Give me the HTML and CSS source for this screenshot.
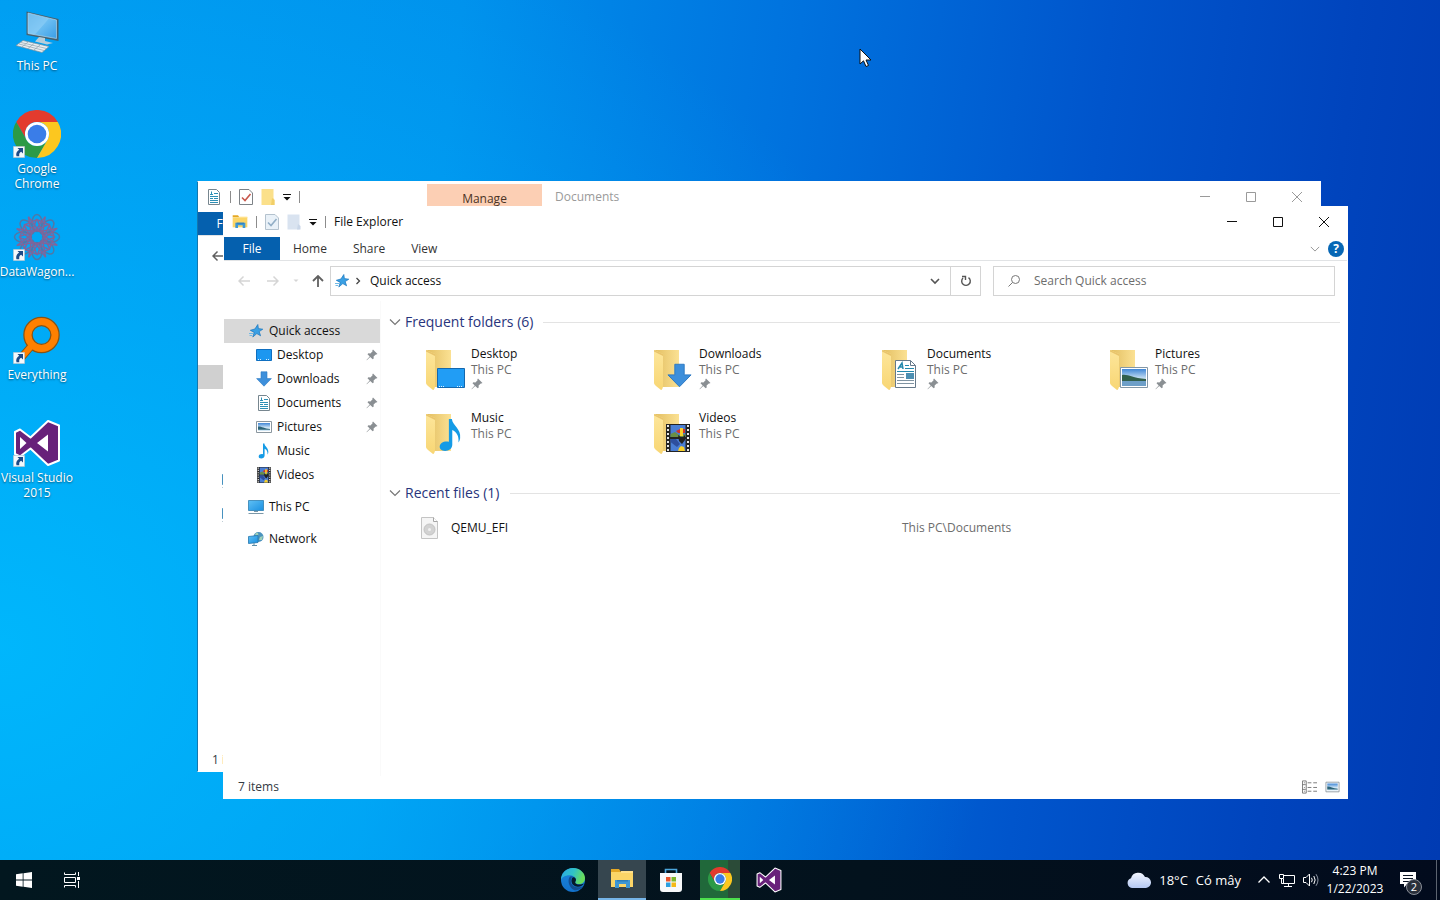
FILE: index.html
```html
<!DOCTYPE html>
<html lang="en">
<head>
    <meta charset="UTF-8">
    <meta name="viewport" content="width=device-width, initial-scale=1.0">
    <title>File Explorer</title>
    <link rel="stylesheet" href="styles.css">
</head>
<body>

    <!-- Shared icons -->
    <svg class="sprite" aria-hidden="true">
        <defs>
            <linearGradient id="gScreen" x1="0" y1="0" x2="1" y2="1">
                <stop offset="0" stop-color="#5fc0f5"/><stop offset="1" stop-color="#1a8fe0"/>
            </linearGradient>
            <linearGradient id="gPc" x1="0" y1="0" x2="1" y2="1">
                <stop offset="0" stop-color="#4fa9e6"/><stop offset="0.5" stop-color="#6cbef2"/><stop offset="1" stop-color="#3a9ee6"/>
            </linearGradient>
            <linearGradient id="gFolder" x1="0" y1="0" x2="1" y2="0">
                <stop offset="0" stop-color="#e3bf62"/><stop offset="1" stop-color="#fbe193"/>
            </linearGradient>
            <linearGradient id="gFlap" x1="0" y1="0" x2="0" y2="1">
                <stop offset="0" stop-color="#fde69b"/><stop offset="1" stop-color="#f8d674"/>
            </linearGradient>
            <linearGradient id="gEdge" x1="0" y1="0" x2="1" y2="0.3">
                <stop offset="0" stop-color="#2aa7e8"/><stop offset="0.55" stop-color="#30c3c6"/><stop offset="1" stop-color="#69dd5c"/>
            </linearGradient>
            <linearGradient id="gEdgeBody" x1="0" y1="0" x2="0" y2="1">
                <stop offset="0" stop-color="#1b86dc"/><stop offset="1" stop-color="#1271cc"/>
            </linearGradient>
            <linearGradient id="gCloud" x1="0" y1="0" x2="0" y2="1">
                <stop offset="0" stop-color="#f3f6ff"/><stop offset="1" stop-color="#b4c8f2"/>
            </linearGradient>
            <linearGradient id="gSky" x1="0" y1="0" x2="0" y2="1">
                <stop offset="0" stop-color="#3f86d6"/><stop offset="0.6" stop-color="#d3e8f6"/>
            </linearGradient>
        </defs>

        <symbol id="chrome" viewBox="0 0 48 48">
            <path fill="#e33b2e" d="M3.2 12A24 24 0 0 1 44.8 12H24A12 12 0 0 0 13.6 30Z"/>
            <path fill="#2c9a46" d="M3.2 12L13.6 30A12 12 0 0 0 34.4 30L24 48A24 24 0 0 1 3.2 12Z"/>
            <path fill="#fcc71f" d="M44.8 12A24 24 0 0 1 24 48L34.4 30A12 12 0 0 0 24 12Z"/>
            <circle cx="24" cy="24" r="12" fill="#fff"/>
            <circle cx="24" cy="24" r="9.3" fill="#3a7de8"/>
        </symbol>

        <symbol id="vs" viewBox="0 0 48 48">
            <path fill="#68217a" stroke="#fff" stroke-width="2" stroke-linejoin="round" d="M35 2L46 6.5V41.5L35 46L17.5 29.5L7 37.5L2 35V13L7 10.5L17.5 18.5Z"/>
            <path fill="#fff" d="M35 15.5V32.5L24 24ZM7 18V30L13.5 24Z"/>
        </symbol>

        <symbol id="shortcut" viewBox="0 0 12 12">
            <path fill="#f4f8fb" stroke="#9aa9b4" stroke-width="0.5" d="M0.3 0.3H11.7V11.7H0.3Z"/>
            <path fill="#1d4a86" d="M4.5 2H10V7.5L8.2 5.8C6.2 6.8 6 8.2 6.3 10.2H3.5C2.6 7.5 3.8 5 6.2 3.8Z"/>
        </symbol>

        <symbol id="star" viewBox="0 0 16 16">
            <path fill="#3aa0e4" stroke="#1a76bd" stroke-width="0.7" d="M9.8 1.5L10.4 5.6L14.8 6.2L11.2 8.6L12.6 12.8L8.8 10.6L4.8 14L6.2 9.4L2.3 7.3L6.9 6Z"/>
            <path stroke="#6fb9e6" stroke-width="1" d="M1 10.5H5M1.5 12.5H4"/>
        </symbol>

        <symbol id="pin" viewBox="0 0 12 12">
            <path fill="#8a8f93" d="M7 0.5L11.5 5L10.3 5.6L9.8 5.4L7.6 7.6L7.7 9.5L6.7 10.3L4.2 7.9L0.8 11.3L0.5 11L3.7 7.4L1.5 5.2L2.4 4.2L4.4 4.4L6.6 2.2L6.3 1.5Z"/>
        </symbol>

        <symbol id="desktopSmall" viewBox="0 0 16 16">
            <path fill="#1c97f0" stroke="#0f6fc0" d="M0.5 2.5H15.5V13.5H0.5Z"/>
            <path stroke="#d8efff" stroke-dasharray="1 1" d="M2 12.5H5M10 12.5H14"/>
        </symbol>

        <symbol id="arrowDown" viewBox="0 0 16 16">
            <path fill="#3d8fdb" stroke="#2b78c2" stroke-width="0.6" d="M5 0.8H11V7.6H15.4L8 15.2L0.6 7.6H5Z"/>
        </symbol>

        <symbol id="docSmall" viewBox="0 0 16 16">
            <path fill="#fff" stroke="#77868f" d="M2.5 0.5H10.5L13.5 3.5V15.5H2.5Z"/>
            <path stroke="#2e8fb5" d="M4 5.5H7M8 4.5H12M4 7.5H12M4 9.5H7M8 9.5H12M4 11.5H12M4 13.5H12M5.5 2.5V5"/>
        </symbol>

        <symbol id="picSmall" viewBox="0 0 16 16">
            <path fill="#fff" stroke="#8b979f" d="M0.5 2.5H15.5V13.5H0.5Z"/>
            <path fill="url(#gSky)" d="M2 4H14V12H2Z"/>
            <path fill="#2c6478" d="M2 7.5C5 7 8 9.5 14 10V10.8H2Z"/>
        </symbol>

        <symbol id="note" viewBox="0 0 16 16">
            <path fill="#159be6" d="M7 0.5H8.4C8.8 3.8 12.8 5 12.3 9.5C12.1 10.6 11.8 11.1 11.5 11.5C11.9 8.5 10.5 6.5 8.6 5.7V12.6C8.6 14.4 7 15.5 5.2 15.5C3.5 15.5 2.5 14.5 2.7 13.2C2.9 11.6 5 10.6 7 11.2Z"/>
        </symbol>

        <symbol id="film" viewBox="0 0 24 28">
            <path fill="#232323" d="M0 0H24V28H0Z"/>
            <path stroke="#e8e8e8" stroke-width="2" stroke-dasharray="2 2" d="M2 1V28M22 1V28"/>
            <path fill="#4a7ed4" d="M4.5 1H19.5V13H4.5ZM4.5 15H19.5V27H4.5Z"/>
            <path fill="#6a8f45" d="M4.5 10L9 8L13 11L19.5 10V13H4.5Z"/>
            <path fill="#2e4f9e" d="M4.5 15H10L14 20L11 23L4.5 18Z"/>
            <path fill="#d23428" d="M10 7L14 5H19V9H12Z"/>
            <path fill="#f7cf2a" d="M14 4H17V12H14ZM13 24L15 22L18 23L19 27H12Z"/>
            <path fill="#222" d="M12 11L16 14L19 11V16L16 20L13 17Z"/>
        </symbol>

        <symbol id="pcSmall" viewBox="0 0 16 16">
            <path fill="url(#gScreen)" stroke="#2f7fb0" stroke-width="0.8" d="M0.5 1.5H15.5V11.5H0.5Z"/>
            <path stroke="#7c98a8" d="M0.5 14.5H15.5M6 12.5H10"/>
        </symbol>

        <symbol id="network" viewBox="0 0 16 16">
            <circle cx="10.5" cy="6" r="5" fill="#4b93bd"/>
            <path fill="#9fd0b8" d="M8 2C10 1 11 3 10 5L7 4ZM12 6L15 5L14 9L11 9Z"/>
            <path fill="url(#gScreen)" stroke="#2476ad" stroke-width="0.8" d="M0.5 5.5L10 4.5V11.5L0.5 12.5Z"/>
            <path stroke="#5d8ea8" d="M4 14.5H9M6 12V14"/>
        </symbol>

        <symbol id="folderBig" viewBox="0 0 28 44">
            <path fill="url(#gFolder)" d="M1 1H25V38H8Z"/>
            <path fill="url(#gFlap)" d="M0 1L9 5V37C9 39 8 41 7 41L2 37C1 36 0 35 0 34Z"/>
            <path fill="#e9c46c" d="M0 1L9 5V7L0 2.5Z"/>
        </symbol>

        <symbol id="explorer" viewBox="0 0 24 22">
            <path fill="#e5a825" d="M1 1H9L11 4H1Z"/>
            <path fill="#fbd567" d="M1 4H23V19H1Z"/>
            <path fill="#ffe08a" d="M11 3H23V5H11Z"/>
            <path fill="#3f97d3" d="M5 12H20V20H16V16H9V20H5Z"/>
            <path fill="#2b7dbb" d="M7 12H18V13.5H7Z"/>
        </symbol>

        <symbol id="check" viewBox="0 0 14 16">
            <path fill="#fff" stroke="#7d8287" d="M0.5 0.5H10L13.5 4V15.5H0.5Z"/>
            <path fill="none" stroke="#c8574c" stroke-width="1.6" d="M3 8.5L6 11.5L11.5 5"/>
        </symbol>

        <symbol id="checkOff" viewBox="0 0 14 16">
            <path fill="#e9f1f8" stroke="#b4c2ce" d="M0.5 0.5H10L13.5 4V15.5H0.5Z"/>
            <path fill="none" stroke="#92aec6" stroke-width="1.6" d="M3 8.5L6 11.5L11.5 5"/>
        </symbol>

        <symbol id="folderTiny" viewBox="0 0 14 16">
            <path fill="#fbe08a" d="M0.5 0H12.5V9L13.5 11V16H0.5Z"/>
            <path fill="#f2cf68" d="M11 9L13.5 11V16H10Z"/>
        </symbol>

        <symbol id="folderTinyOff" viewBox="0 0 14 16">
            <path fill="#d9e3f0" d="M0.5 0.5H12.5V15.5H0.5Z"/>
            <path fill="#c9d6e8" d="M11 10L13.5 12V15.5H10Z"/>
        </symbol>

        <symbol id="more" viewBox="0 0 8 8">
            <path fill="currentColor" d="M0 1H8V2H0ZM0.5 4H7.5L4 7.5Z"/>
        </symbol>

        <symbol id="left" viewBox="0 0 12 12">
            <path fill="none" stroke="currentColor" stroke-width="1.5" d="M12 6H1M5.5 1.5L1 6L5.5 10.5"/>
        </symbol>

        <symbol id="chevron" viewBox="0 0 12 12">
            <path fill="none" stroke="currentColor" stroke-width="1.2" d="M1 3.5L6 8.5L11 3.5"/>
        </symbol>

        <symbol id="min" viewBox="0 0 10 10"><path stroke="currentColor" d="M0 4.5H10"/></symbol>
        <symbol id="max" viewBox="0 0 10 10"><path fill="none" stroke="currentColor" d="M0.5 0.5H9.5V9.5H0.5Z"/></symbol>
        <symbol id="close" viewBox="0 0 10 10"><path stroke="currentColor" d="M0 0L10 10M10 0L0 10"/></symbol>
    </svg>

    <main class="desktop">
        <div class="shortcuts">
            <a class="shortcut" href="#">
                <span class="shortcutIcon">
                    <svg viewBox="0 0 48 48">
                        <path fill="#46606f" d="M13.5 4.5L45.5 12V34L13.5 28Z"/>
                        <path fill="url(#gPc)" stroke="#a9d6f0" stroke-width="0.7" d="M15 6L43.5 13V31.5L15 26.5Z"/>
                        <path fill="#a5dafa" opacity="0.4" d="M15 6L36 11.5L22 27.5L15 26.5Z"/>
                        <path fill="#b8cdd9" d="M26 30L32 31V34L40 36L34 37.5L22 34.5Z"/>
                        <path fill="#e9eff3" stroke="#7c8f9b" stroke-width="0.7" d="M10 33.5L36 39.5L29 45.5L3 38.5Z"/>
                        <path stroke="#8fa0ab" stroke-width="0.7" d="M8 35.5L33.5 41.5M6 37L31 43.5M15 35L9 40M21 36.5L15 41.5M27 38L21 43"/>
                    </svg>
                </span>
                <span>This PC</span>
            </a>
            <a class="shortcut" href="#">
                <span class="shortcutIcon"><svg><use href="#chrome"/></svg><svg class="badge"><use href="#shortcut"/></svg></span>
                <span>Google Chrome</span>
            </a>
            <a class="shortcut" href="#">
                <span class="shortcutIcon">
                    <svg viewBox="-24 -24 48 48">
                        <g fill="none" stroke="#4f78a8" stroke-width="1.5">
                            <ellipse id="petal" cx="0" cy="-14" rx="5" ry="8.5"/>
                            <use href="#petal" transform="rotate(45)"/>
                            <use href="#petal" transform="rotate(90)"/>
                            <use href="#petal" transform="rotate(135)"/>
                            <use href="#petal" transform="rotate(180)"/>
                            <use href="#petal" transform="rotate(225)"/>
                            <use href="#petal" transform="rotate(270)"/>
                            <use href="#petal" transform="rotate(315)"/>
                        </g>
                        <g fill="none" stroke="#80659a" stroke-width="1.5">
                            <path id="spike" d="M-4 -5L0 -22L4 -5L-6 -16L6 -16Z" transform="rotate(22)"/>
                            <use href="#spike" transform="rotate(45)"/>
                            <use href="#spike" transform="rotate(90)"/>
                            <use href="#spike" transform="rotate(135)"/>
                            <use href="#spike" transform="rotate(180)"/>
                            <use href="#spike" transform="rotate(225)"/>
                            <use href="#spike" transform="rotate(270)"/>
                            <use href="#spike" transform="rotate(315)"/>
                        </g>
                    </svg>
                    <svg class="badge"><use href="#shortcut"/></svg>
                </span>
                <span>DataWagon...</span>
            </a>
            <a class="shortcut" href="#">
                <span class="shortcutIcon">
                    <svg viewBox="0 0 48 48">
                        <path stroke="#8a5312" stroke-width="8" d="M20 28L8 42"/>
                        <circle cx="28.5" cy="19" r="13.5" fill="none" stroke="#8a5312" stroke-width="9.5"/>
                        <path stroke="#ff8000" stroke-width="6" d="M21 27L8 42"/>
                        <circle cx="28.5" cy="19" r="13.5" fill="none" stroke="#ff8000" stroke-width="7"/>
                    </svg>
                    <svg class="badge"><use href="#shortcut"/></svg>
                </span>
                <span>Everything</span>
            </a>
            <a class="shortcut" href="#">
                <span class="shortcutIcon"><svg><use href="#vs"/></svg><svg class="badge"><use href="#shortcut"/></svg></span>
                <span>Visual Studio 2015</span>
            </a>
        </div>

        <!-- Background window -->
        <section class="window windowBack">
            <header class="titleBar">
                <svg class="icon16"><use href="#docSmall"/></svg>
                <span class="divider"></span>
                <svg class="iconQuick"><use href="#check"/></svg>
                <svg class="iconQuick"><use href="#folderTiny"/></svg>
                <svg class="iconMore"><use href="#more"/></svg>
                <span class="divider"></span>
                <span class="manageTab">Manage</span>
                <span class="title">Documents</span>
                <div class="caption">
                    <button aria-label="Minimize"><svg><use href="#min"/></svg></button>
                    <button aria-label="Maximize"><svg><use href="#max"/></svg></button>
                    <button aria-label="Close"><svg><use href="#close"/></svg></button>
                </div>
            </header>
            <nav class="tabs"><button class="tab active">File</button></nav>
            <div class="navRow"><button class="navButton" aria-label="Back"><svg><use href="#left"/></svg></button></div>
            <div class="backPane">
                <span class="backSelected"></span>
                <svg class="icon16"><use href="#pcSmall"/></svg>
                <svg class="icon16"><use href="#pcSmall"/></svg>
            </div>
            <footer class="statusBar">1 item</footer>
        </section>

        <!-- Active window -->
        <section class="window windowFront">
            <header class="titleBar">
                <svg class="icon16"><use href="#explorer"/></svg>
                <span class="divider"></span>
                <svg class="iconQuick"><use href="#checkOff"/></svg>
                <svg class="iconQuick"><use href="#folderTinyOff"/></svg>
                <svg class="iconMore"><use href="#more"/></svg>
                <span class="divider"></span>
                <span class="title">File Explorer</span>
                <div class="caption">
                    <button aria-label="Minimize"><svg><use href="#min"/></svg></button>
                    <button aria-label="Maximize"><svg><use href="#max"/></svg></button>
                    <button aria-label="Close"><svg><use href="#close"/></svg></button>
                </div>
            </header>

            <nav class="tabs">
                <button class="tab active">File</button>
                <button class="tab">Home</button>
                <button class="tab">Share</button>
                <button class="tab">View</button>
                <div class="ribbonTools">
                    <button class="ribbonToggle" aria-label="Expand the ribbon"><svg><use href="#chevron"/></svg></button>
                    <button class="help" aria-label="Help">?</button>
                </div>
            </nav>

            <div class="navRow">
                <button class="navButton" disabled aria-label="Back"><svg><use href="#left"/></svg></button>
                <button class="navButton" disabled aria-label="Forward"><svg viewBox="0 0 12 12"><path fill="none" stroke="currentColor" stroke-width="1.5" d="M0 6H11M6.5 1.5L11 6L6.5 10.5"/></svg></button>
                <button class="navButton narrow" disabled aria-label="Recent locations"><svg viewBox="0 0 12 12"><path fill="currentColor" d="M1 3H11L6 8Z"/></svg></button>
                <button class="navButton up" aria-label="Up"><svg viewBox="0 0 12 12"><path fill="none" stroke="currentColor" stroke-width="1.8" d="M6 12V1M1 6L6 1L11 6"/></svg></button>
                <div class="addressBar">
                    <svg class="icon16"><use href="#star"/></svg>
                    <svg class="crumb" viewBox="0 0 6 8"><path fill="none" stroke="currentColor" stroke-width="1.3" d="M1.5 1L4.5 4L1.5 7"/></svg>
                    <span>Quick access</span>
                    <button class="addressDrop" aria-label="Previous locations"><svg viewBox="0 0 10 10"><path fill="none" stroke="currentColor" stroke-width="1.6" d="M1 3L5 7L9 3"/></svg></button>
                    <button class="refresh" aria-label="Refresh"><svg viewBox="0 0 12 12"><path fill="none" stroke="currentColor" stroke-width="1.4" d="M3 3A4.3 4.3 0 1 0 8.5 2.6M2 1.5H5.5V5"/></svg></button>
                </div>
                <label class="search">
                    <svg viewBox="0 0 12 12"><circle cx="7.5" cy="4.5" r="4" fill="none" stroke="currentColor"/><path stroke="currentColor" d="M4.5 7.5L0.5 11.5"/></svg>
                    <input type="text" placeholder="Search Quick access" aria-label="Search Quick access">
                </label>
            </div>

            <div class="panes">
                <nav class="sidebar">
                    <a class="sideItem selected" href="#"><svg class="icon16"><use href="#star"/></svg>Quick access</a>
                    <a class="sideItem child" href="#"><svg class="icon16"><use href="#desktopSmall"/></svg>Desktop<svg class="pin"><use href="#pin"/></svg></a>
                    <a class="sideItem child" href="#"><svg class="icon16"><use href="#arrowDown"/></svg>Downloads<svg class="pin"><use href="#pin"/></svg></a>
                    <a class="sideItem child" href="#"><svg class="icon16"><use href="#docSmall"/></svg>Documents<svg class="pin"><use href="#pin"/></svg></a>
                    <a class="sideItem child" href="#"><svg class="icon16"><use href="#picSmall"/></svg>Pictures<svg class="pin"><use href="#pin"/></svg></a>
                    <a class="sideItem child" href="#"><svg class="icon16"><use href="#note"/></svg>Music</a>
                    <a class="sideItem child" href="#"><svg class="icon16"><use href="#film"/></svg>Videos</a>
                    <a class="sideItem root" href="#"><svg class="icon16"><use href="#pcSmall"/></svg>This PC</a>
                    <a class="sideItem root" href="#"><svg class="icon16"><use href="#network"/></svg>Network</a>
                </nav>

                <div class="content">
                    <h2 class="groupTitle"><svg><use href="#chevron"/></svg>Frequent folders (6)</h2>
                    <div class="folders">
                        <a class="folder" href="#">
                            <svg class="folderIcon" viewBox="0 0 44 48">
                                <use href="#folderBig" x="0" y="3" width="28" height="44"/>
                                <path fill="#219df5" stroke="#1468ae" d="M11.5 22.5H38.5V41.5H11.5Z"/>
                                <path stroke="#dff1ff" stroke-dasharray="1 1" d="M13 40.5H18M31 40.5H37"/>
                            </svg>
                            <span class="folderText"><span>Desktop</span><span class="muted">This PC</span><svg class="pin"><use href="#pin"/></svg></span>
                        </a>
                        <a class="folder" href="#">
                            <svg class="folderIcon" viewBox="0 0 44 48">
                                <use href="#folderBig" x="0" y="3" width="28" height="44"/>
                                <use href="#arrowDown" x="13" y="17" width="25" height="25"/>
                            </svg>
                            <span class="folderText"><span>Downloads</span><span class="muted">This PC</span><svg class="pin"><use href="#pin"/></svg></span>
                        </a>
                        <a class="folder" href="#">
                            <svg class="folderIcon" viewBox="0 0 44 48">
                                <use href="#folderBig" x="0" y="3" width="28" height="44"/>
                                <path fill="#fff" stroke="#66798a" d="M13.5 14.5H28.5L33.5 19.5V41.5H13.5Z"/>
                                <path fill="none" stroke="#66798a" d="M28.5 14.5V19.5H33.5"/>
                                <path fill="none" stroke="#2388ac" stroke-width="1.5" d="M16 23L20 17L21 23M18 21H21"/>
                                <path stroke="#2388ac" d="M23 19.5H27M23 22.5H32M15 25.5H32"/>
                                <path stroke="#8094a2" d="M15 28.5H22M15 31.5H22M15 34.5H32M15 37.5H32"/>
                                <path fill="#4d8fb2" d="M24 27H32V33H24Z"/>
                            </svg>
                            <span class="folderText"><span>Documents</span><span class="muted">This PC</span><svg class="pin"><use href="#pin"/></svg></span>
                        </a>
                        <a class="folder" href="#">
                            <svg class="folderIcon" viewBox="0 0 44 48">
                                <use href="#folderBig" x="0" y="3" width="28" height="44"/>
                                <path fill="#fff" stroke="#8397a6" d="M10.5 21.5H37.5V41.5H10.5Z"/>
                                <path fill="url(#gSky)" d="M12 23H36V40H12Z"/>
                                <path fill="#315f4c" d="M12 29C18 28 22 32 36 33V35H12Z"/>
                                <path fill="#6d9fc8" d="M12 35H36V40H12Z"/>
                            </svg>
                            <span class="folderText"><span>Pictures</span><span class="muted">This PC</span><svg class="pin"><use href="#pin"/></svg></span>
                        </a>
                        <a class="folder" href="#">
                            <svg class="folderIcon" viewBox="0 0 44 48">
                                <use href="#folderBig" x="0" y="3" width="28" height="44"/>
                                <use href="#note" x="8" y="8" width="34" height="34"/>
                            </svg>
                            <span class="folderText"><span>Music</span><span class="muted">This PC</span></span>
                        </a>
                        <a class="folder" href="#">
                            <svg class="folderIcon" viewBox="0 0 44 48">
                                <use href="#folderBig" x="0" y="3" width="28" height="44"/>
                                <use href="#film" x="12" y="14" width="24" height="28"/>
                            </svg>
                            <span class="folderText"><span>Videos</span><span class="muted">This PC</span></span>
                        </a>
                    </div>

                    <h2 class="groupTitle"><svg><use href="#chevron"/></svg>Recent files (1)</h2>
                    <a class="recentFile" href="#">
                        <svg viewBox="0 0 18 22">
                            <path fill="#f5f5f5" stroke="#c4c4c4" d="M0.5 0.5H12.5L16.5 4.5V21.5H0.5Z"/>
                            <path fill="#fff" stroke="#a5a5a5" d="M12.5 0.5V4.5H16.5"/>
                            <circle cx="8.5" cy="12.5" r="5.5" fill="#d2d2d2" stroke="#c2c2c2"/>
                            <circle cx="8.5" cy="12.5" r="1.5" fill="#f0f0f0"/>
                        </svg>
                        <span>QEMU_EFI</span>
                        <span class="muted">This PC\Documents</span>
                    </a>
                </div>
            </div>

            <footer class="statusBar">
                <span>7 items</span>
                <div class="viewButtons">
                    <button aria-label="Details view"><svg viewBox="0 0 16 14"><path fill="none" stroke="#777" d="M0.5 0.5H4.5V13.5H0.5ZM0 4.5H4M0 9.5H4M2 2.5H3M2 7.5H3M2 11.5H3M6 2.5H10M12 2.5H16M6 7.5H10M12 7.5H16M6 11.5H10M12 11.5H16"/></svg></button>
                    <button aria-label="Large icons view"><svg><use href="#picSmall"/></svg></button>
                </div>
            </footer>
        </section>

        <svg class="cursor" viewBox="0 0 14 20">
            <path fill="#fff" stroke="#111" d="M1 1V16L4.5 12.8L7 18.5L9.5 17.5L7 12H12Z"/>
        </svg>
    </main>

    <footer class="taskbar">
        <button class="taskButton" aria-label="Start">
            <svg width="16" height="16" viewBox="0 0 16 16"><path fill="#fff" d="M0 2.3L6.7 1.3V7.5H0ZM7.5 1.2L16 0V7.5H7.5ZM0 8.5H6.7V14.7L0 13.7ZM7.5 8.5H16V16L7.5 14.8Z"/></svg>
        </button>
        <button class="taskButton" aria-label="Task View">
            <svg width="16" height="16" viewBox="0 0 16 16"><path fill="none" stroke="#fff" d="M0.5 0.5V2.5H11.5V0.5M0.5 15.5V13.5H11.5V15.5M0.5 5.5H11.5V10.5H0.5ZM14.5 0V4M14.5 9V16"/><path fill="#fff" d="M13 5H16V8H13Z"/></svg>
        </button>

        <div class="taskApps">
            <button class="taskButton" aria-label="Edge">
                <svg width="24" height="24" viewBox="0 0 24 24">
                    <circle cx="12" cy="12" r="12" fill="url(#gEdgeBody)"/>
                    <path fill="url(#gEdge)" d="M0 12C0 5 5 0 12 0C19 0 24 5 24 10C24 14 21.5 16 18 16C15.5 16 14 15 14 14.2C14 13.5 15.2 13 15 11.3C14.8 9 12 7.3 8.5 7.3C4 7.3 0.7 9.5 0 12Z"/>
                    <path fill="#134e92" d="M9 8.5C6.5 11 7 19 13 22C17 23 20.5 20.5 22.3 18C18 20.5 10.5 19.5 9.8 13.5C9.6 11.5 10.3 9.6 12 8.3Z"/>
                    <path fill="#06192a" d="M11.5 9.5C9.5 12 10 18 16.5 18.8C19.5 19 22 17.5 23 15.5C20 17.2 14.5 17 14.2 14.5C14.5 13 15.3 12.8 14.8 11C14.3 9.5 12.5 8.8 11.5 9.5Z"/>
                </svg>
            </button>
            <button class="taskButton open" aria-label="File Explorer"><svg width="24" height="22"><use href="#explorer"/></svg></button>
            <button class="taskButton" aria-label="Store">
                <svg width="24" height="24" viewBox="0 0 24 24">
                    <path fill="none" stroke="#4ba6dd" stroke-width="1.6" d="M6.5 5V1.5H17.5V5"/>
                    <path fill="#f7f9fa" d="M1 5H23V21C23 23 22 24 20 24H4C2 24 1 23 1 21Z"/>
                    <path fill="#e8532b" d="M7 9H11.5V13.5H7Z"/><path fill="#7eb82c" d="M12.5 9H17V13.5H12.5Z"/>
                    <path fill="#2a9fe0" d="M7 14.5H11.5V19H7Z"/><path fill="#f5b916" d="M12.5 14.5H17V19H12.5Z"/>
                </svg>
            </button>
            <button class="taskButton progress" aria-label="Chrome"><svg width="24" height="24"><use href="#chrome"/></svg></button>
            <button class="taskButton" aria-label="Visual Studio"><svg width="26" height="26"><use href="#vs"/></svg></button>
        </div>

        <div class="tray">
            <button class="weather">
                <svg width="24" height="16" viewBox="0 0 24 16"><path fill="url(#gCloud)" d="M5 16A5 5 0 0 1 4 6.3A7.5 7.5 0 0 1 18 5A5.5 5.5 0 0 1 19 16Z"/></svg>
                <span>18°C</span>
                <span>Có mây</span>
            </button>
            <button aria-label="Show hidden icons"><svg width="14" height="14" viewBox="0 0 14 14"><path fill="none" stroke="#fff" stroke-width="1.3" d="M1.5 9.5L7 4L12.5 9.5"/></svg></button>
            <button aria-label="Network"><svg width="16" height="14" viewBox="0 0 16 14"><path fill="none" stroke="#fff" d="M5 2.5H15.5V10.5H4.5V6M0.5 1.5H4.5V5.5H0.5ZM2.5 6V10.5H5M9.5 11V13M5 13.5H13"/></svg></button>
            <button aria-label="Volume"><svg width="16" height="14" viewBox="0 0 16 14"><path fill="none" stroke="#fff" d="M0.5 4.5H3L6.5 1V13L3 9.5H0.5ZM8.5 4.8Q10 7 8.5 9.2M10.8 3Q13.5 7 10.8 11"/><path fill="none" stroke="#8d95a3" d="M13 1.2Q17 7 13 12.8"/></svg></button>
            <button class="clock"><span>4:23 PM</span><span>1/22/2023</span></button>
            <button class="actionCenter" aria-label="Notifications">
                <svg width="16" height="16" viewBox="0 0 16 16"><path fill="#fff" d="M0 0H16V12H7L4 15.5V12H0Z"/><path stroke="#0a1424" d="M3 3.5H13M3 6.5H13M3 9.5H10"/></svg>
                <span class="count">2</span>
            </button>
        </div>
    </footer>
</body>
</html>
```
FILE: styles.css
```css
* {
    box-sizing: border-box;
}

body {
    margin: 0;
    height: 100vh;
    display: flex;
    flex-direction: column;
    overflow: hidden;
    font-family: "Open Sans", "Noto Sans", sans-serif;
    font-size: 12px;
    line-height: 16px;
    color: #111;
}

button {
    display: flex;
    align-items: center;
    justify-content: center;
    padding: 0;
    border: none;
    background: none;
    font: inherit;
    color: inherit;
}

a {
    color: inherit;
    text-decoration: none;
}

svg {
    flex: none;
}

.sprite {
    position: absolute;
    width: 0;
    height: 0;
}

.icon16 {
    width: 16px;
    height: 16px;
}

.pin {
    width: 12px;
    height: 12px;
}

.muted {
    color: #6d6d6d;
}

/* Desktop */
.desktop {
    flex: 1;
    position: relative;
    background:
        radial-gradient(ellipse 1000px 800px at 0 75%, rgba(0, 190, 255, 0.8), rgba(0, 180, 255, 0) 100%),
        linear-gradient(97deg, #0099f0 0%, #0090ec 30%, #0072de 52%, #0055cc 72%, #0044bd 88%, #003bb3 100%);
}

.shortcuts {
    display: flex;
    flex-direction: column;
    width: 74px;
    padding-top: 7px;
}

.shortcut {
    display: flex;
    flex-direction: column;
    align-items: center;
    gap: 3px;
    height: 103px;
    line-height: 15px;
    text-align: center;
    color: #fff;
    text-shadow: 0 1px 2px rgba(0, 0, 0, 0.5);
}

.shortcutIcon {
    position: relative;
    width: 48px;
    height: 48px;
}

.shortcutIcon svg {
    width: 48px;
    height: 48px;
}

.shortcutIcon .badge {
    position: absolute;
    left: 0;
    bottom: 0;
    width: 12px;
    height: 12px;
}

.cursor {
    position: absolute;
    left: 859px;
    top: 48px;
    width: 14px;
    height: 20px;
}

/* Windows */
.window {
    position: absolute;
    display: flex;
    flex-direction: column;
    background: #fff;
    border: 1px solid #fff;
}

.windowBack {
    top: 181px;
    right: 119px;
    bottom: 88px;
    left: 197px;
    border-left-color: #1377ae;
}

.windowFront {
    top: 206px;
    right: 92px;
    bottom: 61px;
    left: 223px;
}

.titleBar {
    display: flex;
    align-items: center;
    gap: 8px;
    height: 30px;
    padding-left: 8px;
}

.windowBack .titleBar {
    height: 29px;
    margin-bottom: 1px;
}

.iconQuick {
    width: 14px;
    height: 16px;
}

.iconMore {
    width: 8px;
    height: 8px;
}

.divider {
    width: 1px;
    height: 12px;
    background: #8c8c8c;
}

.manageTab {
    align-self: flex-start;
    width: 115px;
    height: 23px;
    margin: 2px 5px 0 119px;
    padding-top: 7px;
    text-align: center;
    background: #fccfb4;
    color: #4a3325;
}

.windowBack .title,
.windowBack .caption {
    color: #9a9a9a;
}

.caption {
    display: flex;
    align-self: stretch;
    margin-left: auto;
}

.caption button {
    width: 46px;
}

.caption svg {
    width: 10px;
    height: 10px;
}

.tabs {
    display: flex;
    height: 24px;
    border-bottom: 1px solid #e1e3e5;
    color: #333;
}

.tab {
    padding: 0 13px;
}

.tab.active {
    width: 56px;
    background: #0560ae;
    color: #fff;
}

.ribbonTools {
    display: flex;
    align-items: center;
    gap: 8px;
    margin-left: auto;
    padding-right: 3px;
}

.ribbonToggle svg {
    width: 10px;
    height: 10px;
    color: #999;
}

.help {
    width: 16px;
    height: 16px;
    border-radius: 50%;
    background: #0767b5;
    color: #fff;
    font-weight: bold;
}

.navRow {
    display: flex;
    align-items: center;
    height: 40px;
    padding: 0 12px 0 5px;
}

.navButton {
    width: 29px;
    color: #606060;
}

.navButton svg {
    width: 12px;
    height: 12px;
}

.navButton:disabled {
    color: #d5d5d5;
}

.navButton.narrow {
    width: 18px;
}

.navButton.narrow svg {
    width: 6px;
    height: 6px;
}

.navButton.up {
    width: 25px;
}

.addressBar {
    display: flex;
    align-items: center;
    flex: 646;
    height: 30px;
    padding-left: 3px;
    border: 1px solid #d4d4d4;
}

.crumb {
    width: 6px;
    height: 8px;
    margin: 0 9px 0 5px;
    color: #444;
}

.addressDrop {
    width: 30px;
    height: 28px;
    margin-left: auto;
    color: #555;
}

.addressDrop svg {
    width: 10px;
    height: 10px;
}

.refresh {
    width: 30px;
    height: 28px;
    border-left: 1px solid #d4d4d4;
    color: #555;
}

.refresh svg {
    width: 12px;
    height: 12px;
}

.search {
    display: flex;
    align-items: center;
    flex: 326;
    gap: 14px;
    height: 30px;
    margin-left: 12px;
    padding-left: 14px;
    border: 1px solid #d4d4d4;
    color: #777;
}

.search svg {
    width: 12px;
    height: 12px;
}

.search input {
    flex: 1;
    min-width: 0;
    padding: 0;
    border: none;
    outline: none;
    background: none;
    font: inherit;
}

.search input::placeholder {
    color: #6d6d6d;
    opacity: 1;
}

/* Navigation pane */
.panes {
    display: flex;
    flex: 1;
    min-height: 0;
}

.sidebar {
    width: 157px;
    padding-top: 18px;
    border-right: 1px solid #fafafa;
}

.sideItem {
    display: flex;
    align-items: center;
    gap: 5px;
    height: 24px;
    padding: 0 2px 0 24px;
}

.sideItem.selected {
    background: #d9d9d9;
}

.sideItem.child {
    padding-left: 32px;
}

.sideItem.root {
    margin-top: 8px;
}

.sideItem .pin {
    margin-left: auto;
}

/* Folder view */
.content {
    flex: 1;
    padding: 9px 7px 0 8px;
}

.groupTitle {
    display: flex;
    align-items: center;
    gap: 4px;
    height: 24px;
    margin: 0 0 12px;
    font-size: 14px;
    font-weight: normal;
    color: #28347c;
}

.groupTitle svg {
    width: 12px;
    height: 12px;
    color: #777;
}

.groupTitle::after {
    content: "";
    flex: 1;
    height: 1px;
    margin-left: 6px;
    background: #e3e3e3;
}

.folders {
    display: grid;
    grid-template-columns: repeat(auto-fill, 228px);
    grid-auto-rows: 64px;
    margin-bottom: 7px;
    padding-left: 37px;
}

.folder {
    display: flex;
    gap: 1px;
}

.folderIcon {
    width: 44px;
    height: 48px;
}

.folderText {
    display: flex;
    flex-direction: column;
}

.recentFile {
    display: grid;
    grid-template-columns: 18px 439px 1fr;
    align-items: center;
    column-gap: 12px;
    padding-left: 32px;
}

.recentFile svg {
    width: 18px;
    height: 22px;
}

.statusBar {
    display: flex;
    align-items: center;
    height: 22px;
    padding: 0 7px 0 14px;
    color: #333a44;
}

.viewButtons {
    display: flex;
    gap: 8px;
    margin-left: auto;
}

.viewButtons svg {
    width: 15px;
    height: 14px;
}

/* Covered window */
.backPane {
    display: flex;
    flex-direction: column;
    flex: 1;
    padding-top: 89px;
}

.backSelected {
    width: 156px;
    height: 24px;
    margin-bottom: 84px;
    background: #d0d0d0;
}

.backPane .icon16 {
    margin: 0 0 18px 24px;
}

/* Taskbar */
.taskbar {
    display: flex;
    height: 40px;
    background: linear-gradient(90deg, #02171f, #03121d 60%, #020b1d);
    color: #fff;
}

.taskButton {
    width: 48px;
}

.taskApps {
    display: flex;
    gap: 1px;
    margin-left: 453px;
}

.taskButton.open {
    background: #36464f;
    border-bottom: 2px solid #76b5e8;
}

.taskButton.progress {
    width: 40px;
    margin: 0 4px;
    background: linear-gradient(90deg, #20683a 70%, #2b4b38 70%);
    border-bottom: 2px solid #4de04d;
}

.tray {
    display: flex;
    gap: 8px;
    margin-left: auto;
    padding-right: 3px;
}

.weather {
    gap: 8px;
    margin-right: 8px;
    font-size: 13px;
}

.clock {
    flex-direction: column;
    width: 56px;
    line-height: 18px;
}

.actionCenter {
    position: relative;
    width: 46px;
    padding-right: 12px;
    border-right: 1px solid #5c6470;
}

.count {
    position: absolute;
    right: 14px;
    bottom: 5px;
    width: 16px;
    height: 16px;
    border: 1px solid #8a8f98;
    border-radius: 50%;
    background: #2a303b;
    font-size: 11px;
    line-height: 14px;
}
```
